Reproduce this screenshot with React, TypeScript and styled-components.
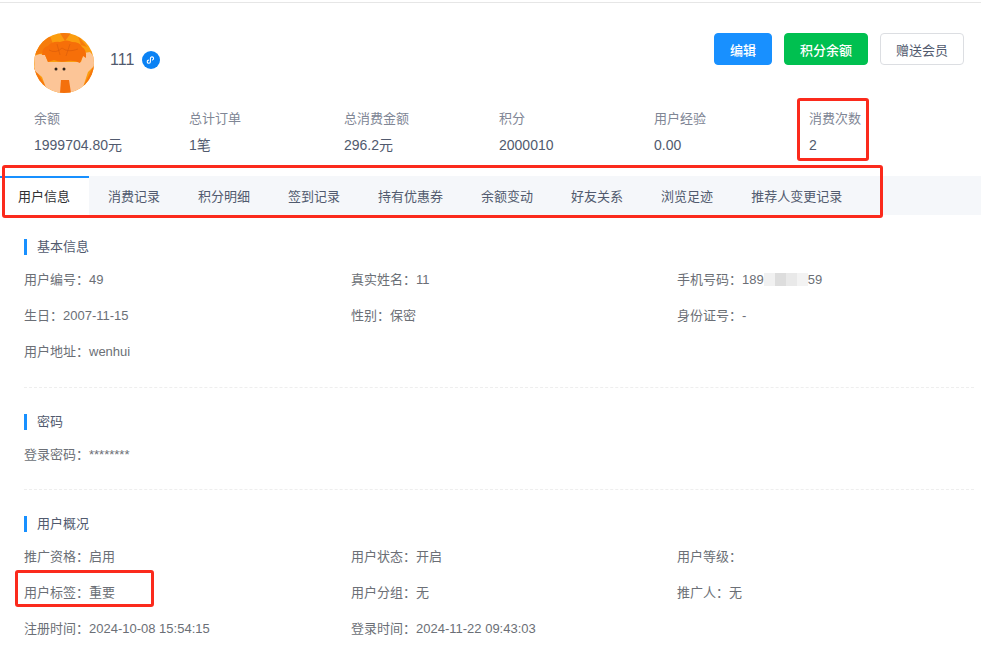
import styled, { createGlobalStyle } from "styled-components";

const GlobalStyle = createGlobalStyle`
  html, body {
    margin: 0;
    background: #fff;
    overflow: hidden;
  }
  body {
    font-family: "Liberation Sans", "Noto Sans CJK SC", sans-serif;
    font-size: 13px;
    color: #666;
  }
`;

const stats = [
  { label: "余额", value: "1999704.80元" },
  { label: "总计订单", value: "1笔" },
  { label: "总消费金额", value: "296.2元" },
  { label: "积分", value: "2000010" },
  { label: "用户经验", value: "0.00" },
  { label: "消费次数", value: "2" },
];

const tabs = ["用户信息", "消费记录", "积分明细", "签到记录", "持有优惠券", "余额变动", "好友关系", "浏览足迹", "推荐人变更记录"];

function Avatar() {
  return (
    <svg width="60" height="60" viewBox="0 0 60 60">
      <defs>
        <clipPath id="round">
          <circle cx="30" cy="30" r="30" />
        </clipPath>
      </defs>
      <g clipPath="url(#round)">
        <rect width="60" height="60" fill="#fb9d0e" />
        <path d="M0 22 L7 9 L16 3 L19 11 L9 20 Z" fill="#f67c0c" />
        <path d="M26 0 L31 8 L37 0 Z" fill="#f5780c" />
        <path d="M44 3 L53 14 L47 12 Z" fill="#f67c0c" />
        <path d="M0 34 L16 60 L0 60 Z" fill="#f7760d" />
        <path d="M60 32 L46 60 L60 60 Z" fill="#f7760d" />
        <path d="M0 23 L6 21 L11 22 L14 29 L47 29 L50 20 L56 19 L60 24 L60 33 L54 39 L47 60 L14 60 L8 44 L1 38 Z" fill="#fcc597" />
        <path d="M8 22 Q8 14 14 13 Q18 8 26 9 Q33 6 38 9 Q46 9 48 14 Q53 17 52 25 L49 23 L46 30 Q40 27 34 28 Q26 30 20 27 L14 29 L11 22 Z" fill="#f66f09" />
        <path d="M15 17 Q22 21 28 15 M28 15 Q34 20 44 16 M23 11 L26 22 M36 11 L32 23" stroke="#d95b0a" strokeWidth="0.6" fill="none" />
        <path d="M27 47 L35 47 L37 60 L26 60 Z" fill="#f4700c" />
        <circle cx="22" cy="36" r="1.5" fill="#33261c" />
        <circle cx="30" cy="36" r="1.5" fill="#33261c" />
      </g>
    </svg>
  );
}

function MiniProgramIcon() {
  return (
    <svg width="18" height="18" viewBox="0 0 18 18">
      <circle cx="9" cy="9" r="9" fill="#0b82f4" />
      <path
        d="M6.5 9.1a1.6 1.6 0 1 0 1.9 1.6V7.5a1.6 1.6 0 1 1 2 1.5"
        fill="none"
        stroke="#fff"
        strokeWidth="1.1"
        strokeLinecap="round"
      />
    </svg>
  );
}

export default function App() {
  return (
    <>
      <GlobalStyle />
      <Page>
        <Header>
          <UserBox>
            <AvatarWrap>
              <Avatar />
            </AvatarWrap>
            <UserName>111</UserName>
            <MiniProgramIcon />
          </UserBox>
          <Actions>
            <ActionButton $bg="#1890ff">编辑</ActionButton>
            <ActionButton $bg="#00c050" $wide>
              积分余额
            </ActionButton>
            <ActionButton $wide>赠送会员</ActionButton>
          </Actions>
        </Header>
        <Stats>
          {stats.map(({ label, value }) => (
            <StatItem key={label}>
              <StatLabel>{label}</StatLabel>
              <StatValue>{value}</StatValue>
            </StatItem>
          ))}
        </Stats>
        <TabBar>
          {tabs.map((name, i) => (
            <Tab key={name} $active={i === 0}>
              {name}
            </Tab>
          ))}
        </TabBar>
        <Section>
          <SectionTitle>基本信息</SectionTitle>
          <InfoGrid>
            <InfoItem>用户编号：49</InfoItem>
            <InfoItem>真实姓名：11</InfoItem>
            <InfoItem>
              手机号码：189
              <Masked>
                <MaskBlock $shade="#f1f1f1" />
                <MaskBlock $shade="#dddddd" />
                <MaskBlock $shade="#e9e9e9" />
                <MaskBlock $shade="#f3f3f3" />
              </Masked>
              59
            </InfoItem>
            <InfoItem>生日：2007-11-15</InfoItem>
            <InfoItem>性别：保密</InfoItem>
            <InfoItem>身份证号：-</InfoItem>
            <InfoItem>用户地址：wenhui</InfoItem>
          </InfoGrid>
        </Section>
        <Section>
          <SectionTitle>密码</SectionTitle>
          <InfoGrid>
            <InfoItem>登录密码：********</InfoItem>
          </InfoGrid>
        </Section>
        <Section $last>
          <SectionTitle>用户概况</SectionTitle>
          <InfoGrid>
            <InfoItem>推广资格：启用</InfoItem>
            <InfoItem>用户状态：开启</InfoItem>
            <InfoItem>用户等级：</InfoItem>
            <InfoItem>用户标签：重要</InfoItem>
            <InfoItem>用户分组：无</InfoItem>
            <InfoItem>推广人：无</InfoItem>
            <InfoItem>注册时间：2024-10-08 15:54:15</InfoItem>
            <InfoItem>登录时间：2024-11-22 09:43:03</InfoItem>
          </InfoGrid>
        </Section>
        <RedMark $left={797} $top={98} $width={72} $height={63} />
        <RedMark $left={2} $top={165} $width={881} $height={53} />
        <RedMark $left={15} $top={570} $width={139} $height={37} />
      </Page>
    </>
  );
}

const Page = styled.div`
  position: relative;
  height: 658px;
  margin-top: 2px;
  border-top: 1px solid #e6e6e6;
  box-sizing: content-box;
`;
const Header = styled.div`
  display: flex;
  justify-content: space-between;
  padding: 30px 17px 0 34px;
`;
const UserBox = styled.div`
  display: flex;
  align-items: center;
  height: 54px;
  padding-bottom: 6px;
`;
const AvatarWrap = styled.div`
  width: 60px;
  height: 60px;
  margin-top: 6px;
  margin-right: 16px;
`;
const UserName = styled.span`
  font-size: 16px;
  color: #515a6e;
  margin-right: 8px;
`;
const Actions = styled.div`
  display: flex;
  gap: 12px;
`;
const ActionButton = styled.div<{ $bg?: string; $wide?: boolean }>`
  width: ${(p) => (p.$wide ? "84px" : "58px")};
  height: 32px;
  box-sizing: border-box;
  display: flex;
  align-items: center;
  justify-content: center;
  border-radius: 4px;
  font-size: 13px;
  font-weight: ${(p) => (p.$bg ? 500 : 400)};
  background: ${(p) => p.$bg ?? "#fff"};
  color: ${(p) => (p.$bg ? "#fff" : "#515a6e")};
  border: 1px solid ${(p) => p.$bg ?? "#dcdee2"};
`;
const Stats = styled.div`
  display: grid;
  grid-template-columns: repeat(6, 155px);
  padding: 17px 0 0 34px;
`;
const StatItem = styled.div`
  display: flex;
  flex-direction: column;
  gap: 8px;
`;
const StatLabel = styled.div`
  line-height: 18px;
  color: #808695;
`;
const StatValue = styled.div`
  font-size: 14px;
  line-height: 18px;
  color: #515a6e;
`;
const TabBar = styled.div`
  display: flex;
  height: 39px;
  margin-top: 22px;
  background: #f5f7fa;
`;
const Tab = styled.div<{ $active?: boolean }>`
  display: flex;
  align-items: center;
  padding: 0 19px;
  line-height: 1;
  color: ${(p) => (p.$active ? "#303133" : "#515a6e")};
  background: ${(p) => (p.$active ? "#fff" : "transparent")};
  border-top: 2px solid ${(p) => (p.$active ? "#1890ff" : "transparent")};
  box-sizing: border-box;
  &:first-child {
    padding-left: 18px;
  }
`;
const Section = styled.section<{ $last?: boolean }>`
  margin: 0 7px 0 24px;
  padding-top: 26px;
  padding-bottom: ${(p) => (p.$last ? "0" : "26px")};
  border-bottom: ${(p) => (p.$last ? "none" : "1px dashed #eeeeee")};
  &:first-of-type {
    padding-top: 24px;
  }
  &:nth-of-type(2) {
    padding-bottom: 25px;
  }
`;
const SectionTitle = styled.div`
  border-left: 3px solid #1890ff;
  padding-left: 10px;
  line-height: 16px;
  color: #515a6e;
`;
const InfoGrid = styled.div`
  display: grid;
  grid-template-columns: 327px 326px 1fr;
  row-gap: 18px;
  margin-top: 16px;
`;
const InfoItem = styled.div`
  line-height: 18px;
  color: #6b6f76;
  white-space: nowrap;
`;
const Masked = styled.span`
  display: inline-flex;
  width: 44px;
  height: 13px;
  vertical-align: -2px;
`;
const MaskBlock = styled.span<{ $shade: string }>`
  flex: 1;
  background: ${(p) => p.$shade};
`;
const RedMark = styled.div<{ $left: number; $top: number; $width: number; $height: number }>`
  position: absolute;
  left: ${(p) => p.$left}px;
  top: ${(p) => p.$top - 3}px;
  width: ${(p) => p.$width}px;
  height: ${(p) => p.$height}px;
  box-sizing: border-box;
  border: 3px solid #fb2a1c;
  border-radius: 3px;
  pointer-events: none;
`;
